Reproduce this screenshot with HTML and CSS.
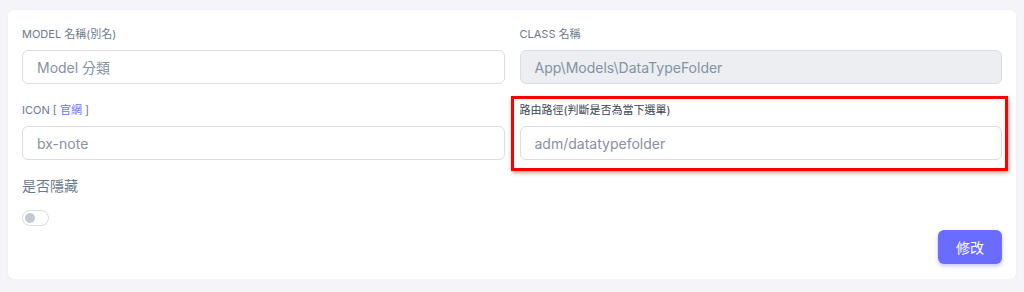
FILE: index.html
```html
<!DOCTYPE html>
<html lang="zh-Hant">
<head>
    <meta charset="UTF-8">
    <meta name="viewport" content="width=device-width, initial-scale=1.0">
    <title>Model 分類</title>
    <link rel="stylesheet" href="styles.css">
</head>
<body>

<div class="card">
    <div class="form-grid">
        <div class="field">
            <label class="field-label">MODEL 名稱(別名)</label>
            <input type="text" class="field-input" value="Model 分類">
        </div>
        <div class="field">
            <label class="field-label">CLASS 名稱</label>
            <input type="text" class="field-input" value="App\Models\DataTypeFolder" disabled>
        </div>
        <div class="field">
            <label class="field-label">ICON [ <a href="#" class="label-link">官網</a> ]</label>
            <input type="text" class="field-input" value="bx-note">
        </div>
        <div class="field highlighted">
            <label class="field-label plain">路由路徑(判斷是否為當下選單)</label>
            <input type="text" class="field-input" value="adm/datatypefolder">
            <div class="mark-box"></div>
        </div>
    </div>

    <div class="hidden-row">
        <div class="hidden-label">是否隱藏</div>
        <label class="switch">
            <input type="checkbox">
            <span class="knob"></span>
        </label>
    </div>

    <div class="actions">
        <button class="btn-primary">修改</button>
    </div>
</div>

</body>
</html>
```

FILE: styles.css
```css
body {
    font-family: Inter, "Noto Sans CJK TC", sans-serif;
    background-color: #f5f5f9;
    color: #697a8d;
    margin: 0;
    padding: 10px 8px 0 8px;
}
.card {
    background: #fff;
    border-radius: 6px;
    padding: 16px 14px 15px 14px;
    box-shadow: 0 1px 3px rgba(67, 89, 113, 0.06);
}
.form-grid {
    display: grid;
    grid-template-columns: 1fr 1fr;
    column-gap: 15px;
    row-gap: 18px;
}
.field {
    display: flex;
    flex-direction: column;
    position: relative;
}
.field-label {
    font-size: 11px;
    line-height: 16px;
    height: 16px;
    color: #697a8d;
    text-transform: uppercase;
    margin-bottom: 8px;
}
.field-label.plain {
    color: #384551;
    text-transform: none;
}
.label-link {
    color: #696cff;
    text-decoration: none;
}
.field-input {
    height: 34px;
    box-sizing: border-box;
    border: 1px solid #d9dee3;
    border-radius: 6px;
    padding: 0 14px;
    font-family: inherit;
    font-size: 14px;
    color: #8592a3;
    background: #fff;
    width: 100%;
}
.field-input:disabled {
    background: #eceef1;
    color: #8592a3;
}
.mark-box {
    position: absolute;
    left: -9px;
    top: -6px;
    right: -6px;
    bottom: -11px;
    border: 3px solid #f00;
    box-shadow: 1px 2px 4px rgba(0, 0, 0, 0.35);
    pointer-events: none;
}
.hidden-row {
    margin-top: 16px;
}
.hidden-label {
    font-size: 14px;
    line-height: 20px;
    color: #697a8d;
    margin-bottom: 14px;
}
.switch {
    display: inline-block;
    position: relative;
    width: 27px;
    height: 16px;
}
.switch input {
    display: none;
}
.knob {
    display: block;
    width: 100%;
    height: 100%;
    box-sizing: border-box;
    border: 1px solid #d9dee3;
    border-radius: 8px;
    background: #fff;
    position: relative;
}
.knob::after {
    content: "";
    position: absolute;
    left: 2px;
    top: 2px;
    width: 10px;
    height: 10px;
    border-radius: 50%;
    background: #c3cad3;
}
.actions {
    display: flex;
    justify-content: flex-end;
    margin-top: 0;
}
.btn-primary {
    width: 64px;
    height: 34px;
    background-color: #696cff;
    color: #fff;
    border: none;
    border-radius: 6px;
    font-family: inherit;
    font-size: 14px;
    cursor: pointer;
    box-shadow: 0 2px 4px rgba(105, 108, 255, 0.4);
}
```
